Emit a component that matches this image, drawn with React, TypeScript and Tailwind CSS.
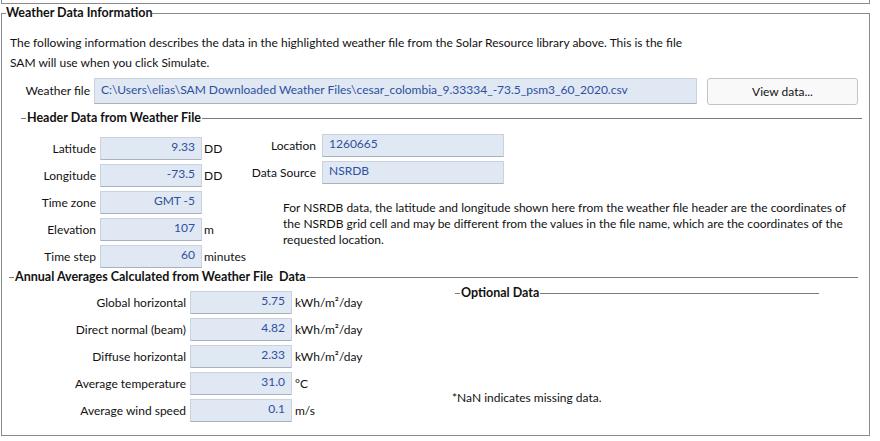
import React from 'react';

type FieldProps = { value: string; left?: boolean; className?: string };

function Field({ value, left, className = '' }: FieldProps) {
  return (
    <div
      className={`h-[23px] flex items-center pb-[3px] bg-[#dfe8f3] border border-[#c9d2de] border-b-[#a8b2be] rounded-[1px] text-[#2f4f9f] ${
        left ? 'justify-start pl-[6px]' : 'justify-end pr-[6px]'
      } ${className}`}
    >
      {value}
    </div>
  );
}

function GroupTitle({ title, className = '', lead = '' }: { title: string; className?: string; lead?: string }) {
  return (
    <div className={`flex items-center h-[16px] ${className}`}>
      <div className={`h-px w-[5px] bg-[#7a7a7a] ${lead}`} />
      <span className="pl-[1px] pr-[1px] font-bold text-[12.5px] whitespace-pre">{title}</span>
      <div className="h-px flex-1 bg-[#7a7a7a]" />
    </div>
  );
}

const header = [
  { label: 'Latitude', value: '9.33', unit: 'DD' },
  { label: 'Longitude', value: '-73.5', unit: 'DD' },
  { label: 'Time zone', value: 'GMT -5', unit: '' },
  { label: 'Elevation', value: '107', unit: 'm' },
  { label: 'Time step', value: '60', unit: 'minutes' },
];

const averages = [
  { label: 'Global horizontal', value: '5.75', unit: 'kWh/m²/day' },
  { label: 'Direct normal (beam)', value: '4.82', unit: 'kWh/m²/day' },
  { label: 'Diffuse horizontal', value: '2.33', unit: 'kWh/m²/day' },
  { label: 'Average temperature', value: '31.0', unit: '°C' },
  { label: 'Average wind speed', value: '0.1', unit: 'm/s' },
];

export default function App() {
  return (
    <div className="w-[880px] h-[441px] overflow-hidden bg-white font-[Lato,sans-serif] text-[12px] text-[#111]">
      <div className="ml-[1px] w-[869px] h-[4px] border-x border-b border-[#8a8a8a]" />

      <fieldset className="ml-[1px] w-[869px] h-[432px] border border-[#8a8a8a]">
        <legend className="ml-[4px] font-bold text-[12.5px] leading-[18px]">Weather Data Information</legend>

        <div className="pl-[8px] pt-[11px] leading-[20px] whitespace-nowrap">
          The following information describes the data in the highlighted weather file from the Solar Resource library above. This is the file
          <br />
          SAM will use when you click Simulate.
        </div>

        <div className="mt-[5px] flex items-start">
          <div className="w-[88px] h-[26px] flex items-center justify-end whitespace-nowrap">Weather file</div>
          <div className="ml-[4px] w-[603px] h-[26px] flex items-center pl-[6px] pb-[3px] bg-[#dfe8f3] border border-[#c9d2de] border-b-[#a8b2be] text-[#2f4f9f] whitespace-nowrap">
            C:\Users\elias\SAM Downloaded Weather Files\cesar_colombia_9.33334_-73.5_psm3_60_2020.csv
          </div>
          <button className="ml-[10px] w-[151px] h-[27px] bg-[#f9f9f9] border border-[#c4c4c4] rounded-[3px] text-[12px]">
            View data...
          </button>
        </div>

        <GroupTitle title="Header Data from Weather File" className="mt-[5px] mr-[7px]" lead="ml-[19px]" />

        <div className="flex items-start">
          <div className="mt-[11px] w-[250px] flex flex-col gap-[4px]">
            {header.map((r) => (
              <div key={r.label} className="h-[23px] flex items-center">
                <div className="w-[94px] flex justify-end whitespace-nowrap">{r.label}</div>
                <Field value={r.value} className="ml-[4px] w-[102px]" />
                <div className="ml-[2px] whitespace-nowrap">{r.unit}</div>
              </div>
            ))}
          </div>

          <div className="mt-[8px] flex flex-col">
            <div className="h-[23px] flex items-center">
              <div className="w-[64px] flex justify-end whitespace-nowrap">Location</div>
              <Field value="1260665" left className="ml-[6px] w-[182px]" />
            </div>
            <div className="mt-[4px] h-[23px] flex items-center">
              <div className="w-[64px] flex justify-end whitespace-nowrap">Data Source</div>
              <Field value="NSRDB" left className="ml-[6px] w-[182px]" />
            </div>
            <div className="mt-[16px] ml-[31px] leading-[16px] whitespace-nowrap">
              For NSRDB data, the latitude and longitude shown here from the weather file header are the coordinates of
              <br />
              the NSRDB grid cell and may be different from the values in the file name, which are the coordinates of the
              <br />
              requested location.
            </div>
          </div>
        </div>

        <GroupTitle title="Annual Averages Calculated from Weather File  Data" className="mt-[1px] mr-[11px]" lead="ml-[7px]" />

        <div className="flex items-start">
          <div className="mt-[6px] w-[450px] flex flex-col gap-[4px]">
            {averages.map((r) => (
              <div key={r.label} className="h-[23px] flex items-center">
                <div className="w-[184px] flex justify-end whitespace-nowrap">{r.label}</div>
                <Field value={r.value} className="ml-[4px] w-[102px]" />
                <div className="ml-[3px] whitespace-nowrap">{r.unit}</div>
              </div>
            ))}
          </div>

          <div className="flex flex-col">
            <GroupTitle title="Optional Data" className="ml-[3px] w-[364px]" />
            <div className="mt-[89px] leading-[16px]">*NaN indicates missing data.</div>
          </div>
        </div>
      </fieldset>
    </div>
  );
}
